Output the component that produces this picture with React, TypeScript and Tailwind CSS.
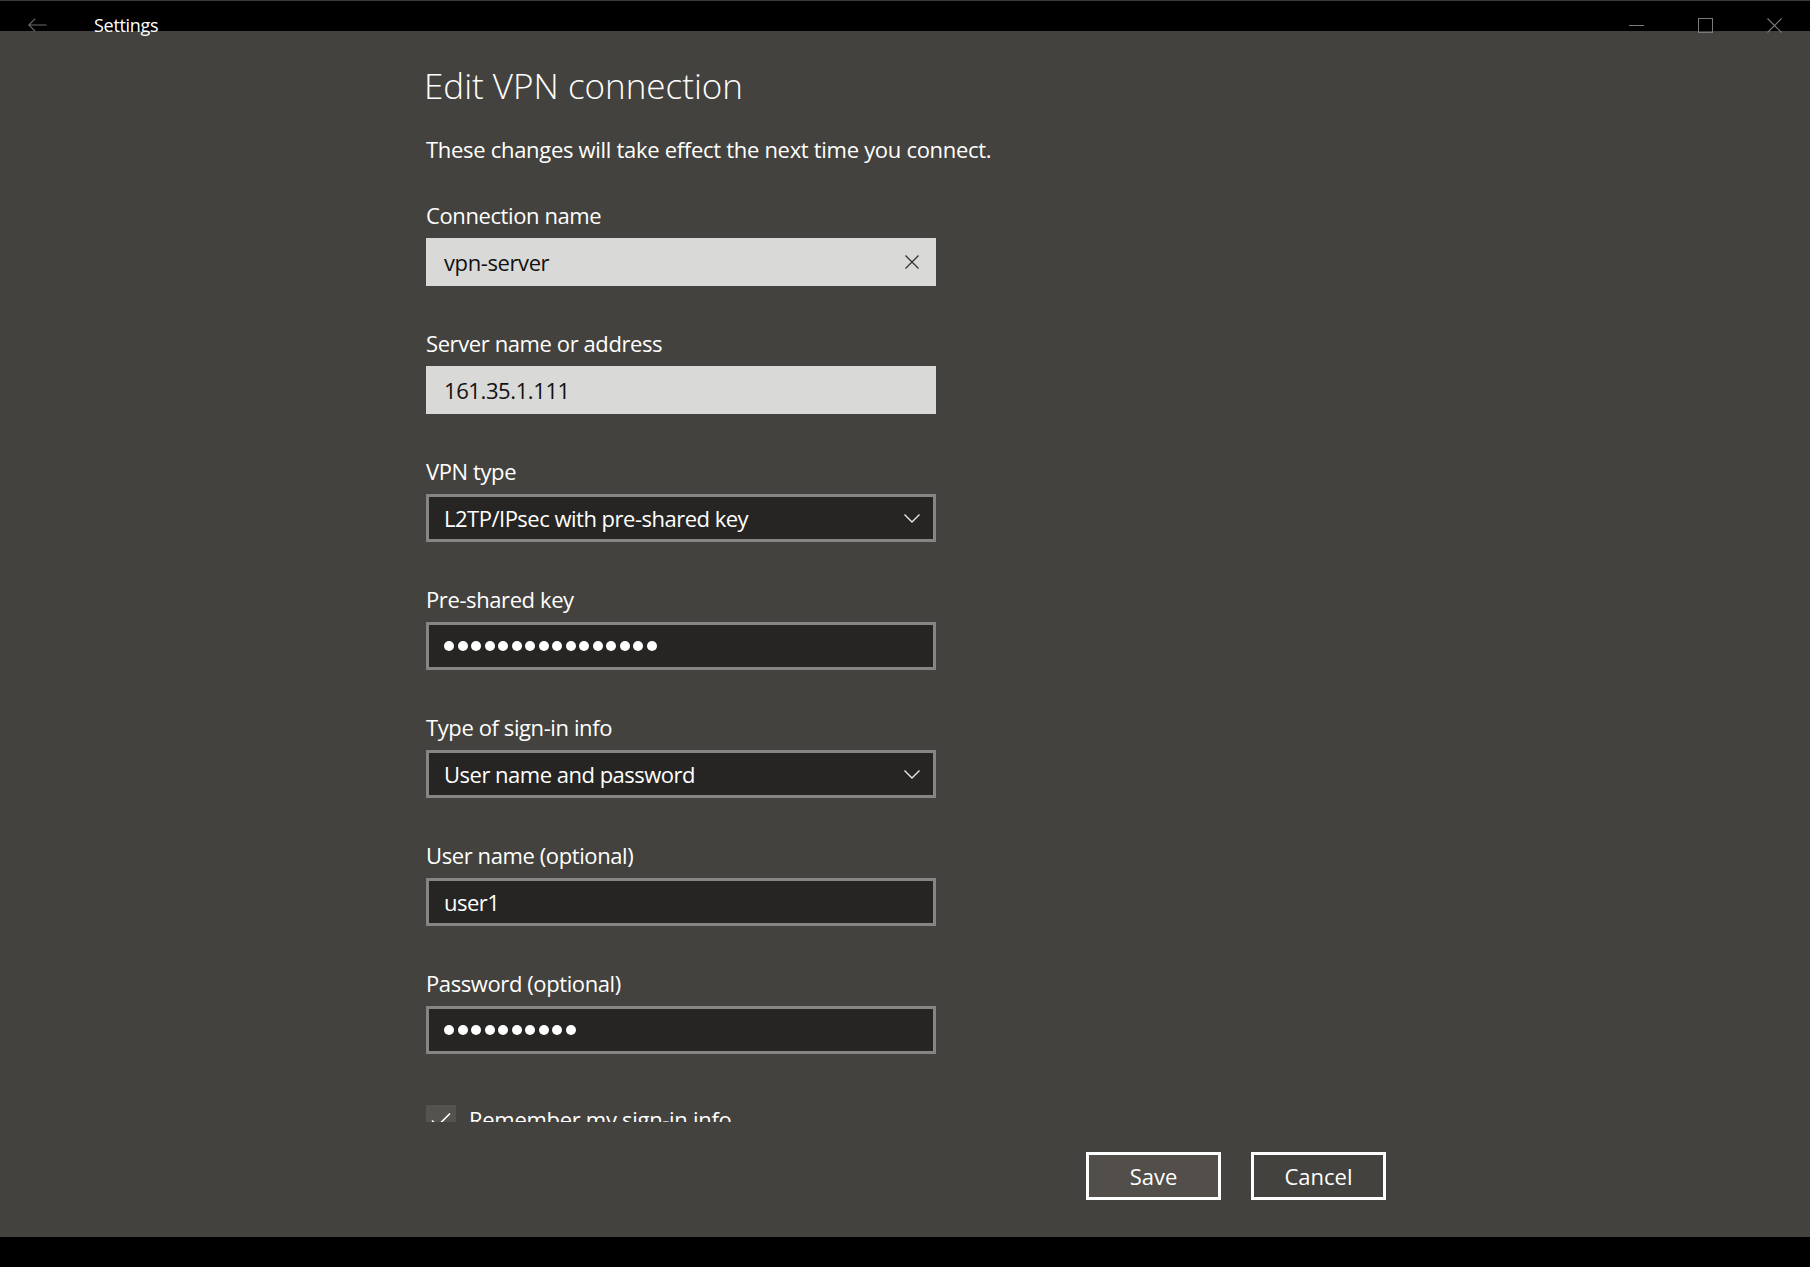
import React from "react";

const font = { fontFamily: '"Open Sans", "Noto Sans", sans-serif' };

const Dots = ({ n }: { n: number }) => (
  <div className="flex items-center gap-[3.5px]">
    {Array.from({ length: n }).map((_, i) => (
      <div key={i} className="w-[10px] h-[10px] rounded-full bg-white" />
    ))}
  </div>
);

const Chevron = () => (
  <svg width="16" height="9" viewBox="0 0 16 9" className="shrink-0">
    <path d="M0.5 0.5 L8 8 L15.5 0.5" fill="none" stroke="#e8e8e8" strokeWidth="1.4" />
  </svg>
);

const Field = ({ label, children }: { label: string; children: React.ReactNode }) => (
  <div className="flex flex-col mb-[42px]">
    <div className="h-[30px] leading-[30px] text-[22px] tracking-[-0.4px] text-white mb-[8px]">{label}</div>
    {children}
  </div>
);

const LightBox = ({ value, clear }: { value: string; clear?: boolean }) => (
  <div className="w-[510px] h-[48px] bg-[#d9d9d7] flex items-center justify-between pl-[18px] pr-[17px] text-[22px] tracking-[-0.4px] text-[#111]">
    <span>{value}</span>
    {clear && (
      <svg width="14" height="14" viewBox="0 0 14 14">
        <path d="M0.5 0.5 L13.5 13.5 M13.5 0.5 L0.5 13.5" stroke="#333" strokeWidth="1.3" />
      </svg>
    )}
  </div>
);

const DarkBox = ({ children, chevron }: { children: React.ReactNode; chevron?: boolean }) => (
  <div className="w-[510px] h-[48px] bg-[#262523] border-[3px] border-[#858585] flex items-center justify-between pl-[15px] pr-[13px] text-[22px] tracking-[-0.5px] text-white">
    {children}
    {chevron && <Chevron />}
  </div>
);

export default function App() {
  return (
    <div className="w-[1810px] h-[1267px] bg-[#44423e] flex flex-col overflow-hidden" style={font}>
      {/* title bar */}
      <div className="relative z-10 h-[31px] bg-black border-t border-[#3a3a3a] flex items-start shrink-0">
        <svg width="19" height="14" viewBox="0 0 19 14" className="ml-[28px] mt-[17px]">
          <path d="M18.5 7 H1 M7 0.8 L0.8 7 L7 13.2" fill="none" stroke="#6a6a6a" strokeWidth="1.2" />
        </svg>
        <span className="ml-[47px] mt-[12px] text-[18px] leading-[24px] tracking-[-0.3px] text-white">Settings</span>
        <div className="ml-auto flex items-start">
          <div className="w-[15px] h-px bg-[#7a7a7a] mt-[24px]" />
          <div className="ml-[54px] mt-[17px] w-[15px] h-[15px] border border-[#7a7a7a]" />
          <svg width="15" height="15" viewBox="0 0 15 15" className="ml-[54px] mt-[17px] mr-[28px]">
            <path d="M0.5 0.5 L14.5 14.5 M14.5 0.5 L0.5 14.5" stroke="#7a7a7a" strokeWidth="1.1" />
          </svg>
        </div>
      </div>

      {/* scrollable content, clipped like the real scroll viewer */}
      <div className="flex-1 overflow-hidden">
        <div className="w-[960px] mx-auto pl-[1px] pt-[31px]">
          <h1 className="h-[48px] leading-[48px] text-[35px] font-light text-white -ml-[2px]">Edit VPN connection</h1>
          <p className="mt-[24px] h-[30px] leading-[30px] text-[22px] tracking-[-0.3px] text-white">
            These changes will take effect the next time you connect.
          </p>
          <div className="mt-[36px]">
            <Field label="Connection name">
              <LightBox value="vpn-server" clear />
            </Field>
            <Field label="Server name or address">
              <LightBox value="161.35.1.111" />
            </Field>
            <Field label="VPN type">
              <DarkBox chevron>
                <span>L2TP/IPsec with pre-shared key</span>
              </DarkBox>
            </Field>
            <Field label="Pre-shared key">
              <DarkBox>
                <Dots n={16} />
              </DarkBox>
            </Field>
            <Field label="Type of sign-in info">
              <DarkBox chevron>
                <span>User name and password</span>
              </DarkBox>
            </Field>
            <Field label="User name (optional)">
              <DarkBox>
                <span>user1</span>
              </DarkBox>
            </Field>
            <Field label="Password (optional)">
              <DarkBox>
                <Dots n={10} />
              </DarkBox>
            </Field>
            <div className="flex items-start mt-[51px]">
              <div className="w-[30px] h-[30px] bg-[#55534f] flex items-center justify-center">
                <svg width="20" height="16" viewBox="0 0 20 16">
                  <path d="M1 8.5 L6.5 14 L19 1.5" fill="none" stroke="#fff" strokeWidth="1.6" />
                </svg>
              </div>
              <span className="ml-[13px] mt-[-1px] leading-[30px] text-[22px] tracking-[-0.3px] text-white">Remember my sign-in info</span>
            </div>
          </div>
        </div>
      </div>

      {/* footer buttons */}
      <div className="h-[115px] shrink-0 flex justify-end gap-[30px] pt-[30px] pr-[424px]">
        <button className="w-[135px] h-[48px] bg-[#524e4a] border-[3px] border-white text-white text-[22px]">Save</button>
        <button className="w-[135px] h-[48px] border-[3px] border-white text-white text-[22px]">Cancel</button>
      </div>

      <div className="h-[30px] bg-black shrink-0" />
    </div>
  );
}
